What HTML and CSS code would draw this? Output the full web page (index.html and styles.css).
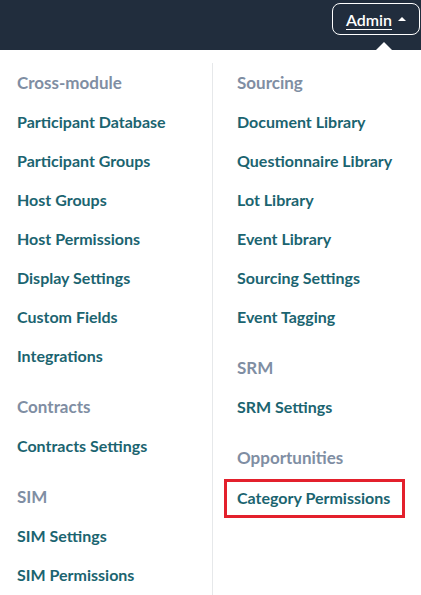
FILE: index.html
```html
<!DOCTYPE html>
<html>
<head>
<meta charset="utf-8">
<link rel="stylesheet" href="styles.css">
</head>
<body>
<header class="topbar">
  <a class="admin-btn">Admin <span class="caret"></span></a>
  <span class="pointer"></span>
</header>
<div class="menu">
  <div class="col">
    <div class="group">
      <div class="title">Cross-module</div>
      <a class="item">Participant Database</a>
      <a class="item">Participant Groups</a>
      <a class="item">Host Groups</a>
      <a class="item">Host Permissions</a>
      <a class="item">Display Settings</a>
      <a class="item">Custom Fields</a>
      <a class="item">Integrations</a>
    </div>
    <div class="group">
      <div class="title">Contracts</div>
      <a class="item">Contracts Settings</a>
    </div>
    <div class="group">
      <div class="title">SIM</div>
      <a class="item">SIM Settings</a>
      <a class="item">SIM Permissions</a>
    </div>
  </div>
  <div class="col col-right">
    <div class="group">
      <div class="title">Sourcing</div>
      <a class="item">Document Library</a>
      <a class="item">Questionnaire Library</a>
      <a class="item">Lot Library</a>
      <a class="item">Event Library</a>
      <a class="item">Sourcing Settings</a>
      <a class="item">Event Tagging</a>
    </div>
    <div class="group">
      <div class="title">SRM</div>
      <a class="item">SRM Settings</a>
    </div>
    <div class="group">
      <div class="title">Opportunities</div>
      <a class="item highlight">Category Permissions</a>
    </div>
  </div>
</div>
</body>
</html>
```
FILE: styles.css
```css
* { box-sizing: border-box; }
body {
  margin: 0;
  background: #fff;
  font-family: "Lato", "Noto Sans", sans-serif;
  width: 421px;
  height: 595px;
  overflow: hidden;
}
.topbar {
  position: relative;
  height: 50px;
  background: #212d3d;
  display: flex;
  justify-content: flex-end;
  align-items: flex-start;
  padding: 3px 1px 0 0;
}
.admin-btn {
  display: flex;
  align-items: center;
  gap: 6px;
  height: 32px;
  width: 88px;
  padding-left: 13px;
  border: 1px solid #fff;
  border-radius: 8px;
  color: #fff;
  font-size: 16px;
  font-weight: 600;
  text-decoration: underline;
  text-underline-offset: 3px;
}
.caret {
  width: 0; height: 0;
  border-left: 4px solid transparent;
  border-right: 4px solid transparent;
  border-bottom: 4px solid #fff;
}
.pointer {
  position: absolute;
  left: 376px;
  bottom: 0;
  width: 0; height: 0;
  border-left: 8px solid transparent;
  border-right: 8px solid transparent;
  border-bottom: 8px solid #fff;
}
.menu {
  display: flex;
  padding-top: 13px;
}
.col {
  width: 213px;
  padding: 10px 0 0 17px;
  border-right: 1px solid #e6e8ea;
  min-height: 545px;
}
.col-right {
  width: 208px;
  border-right: none;
  padding-left: 24px;
}
.group {
  display: flex;
  flex-direction: column;
  margin-bottom: 12px;
}
.title {
  height: 39px;
  line-height: 20px;
  font-size: 17px;
  font-weight: 700;
  color: #7f8ea3;
}
.item {
  height: 39px;
  line-height: 20px;
  font-size: 16px;
  font-weight: 700;
  color: #1b6470;
}
.highlight {
  align-self: flex-start;
  margin-left: -13px;
  margin-top: -8px;
  height: 39px;
  padding: 6px 12px 0 10px;
  border: 3px solid #e3202c;
}
```
